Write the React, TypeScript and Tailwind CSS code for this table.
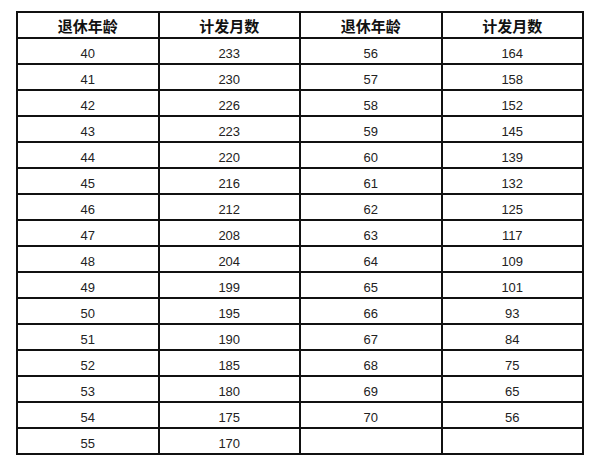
import * as React from "react";

const left: [number, number][] = [
  [40, 233], [41, 230], [42, 226], [43, 223], [44, 220], [45, 216], [46, 212], [47, 208],
  [48, 204], [49, 199], [50, 195], [51, 190], [52, 185], [53, 180], [54, 175], [55, 170],
];
const right: [number, number][] = [
  [56, 164], [57, 158], [58, 152], [59, 145], [60, 139], [61, 132], [62, 125], [63, 117],
  [64, 109], [65, 101], [66, 93], [67, 84], [68, 75], [69, 65], [70, 56],
];

function Cell({ children, head }: { children?: React.ReactNode; head?: boolean }) {
  return (
    <div
      className={
        "flex h-[24px] items-center justify-center bg-white " +
        (head ? "pt-[4px] text-[15px] font-bold text-[#111]" : "pt-[6px] text-[13px] text-[#222]")
      }
    >
      {children}
    </div>
  );
}

export default function App() {
  return (
    <div
      className="min-h-[463px] w-[600px] bg-white pl-[16px] pt-[11px]"
      style={{ fontFamily: '"Liberation Sans", "Noto Sans CJK SC", sans-serif' }}
    >
      <div className="grid w-[568px] grid-cols-4 gap-[2px] bg-[#111] p-[2px]">
        <Cell head>退休年龄</Cell>
        <Cell head>计发月数</Cell>
        <Cell head>退休年龄</Cell>
        <Cell head>计发月数</Cell>
        {left.map((l, i) => {
          const r = right[i];
          return (
            <React.Fragment key={l[0]}>
              <Cell>{l[0]}</Cell>
              <Cell>{l[1]}</Cell>
              <Cell>{r ? r[0] : ""}</Cell>
              <Cell>{r ? r[1] : ""}</Cell>
            </React.Fragment>
          );
        })}
      </div>
    </div>
  );
}
